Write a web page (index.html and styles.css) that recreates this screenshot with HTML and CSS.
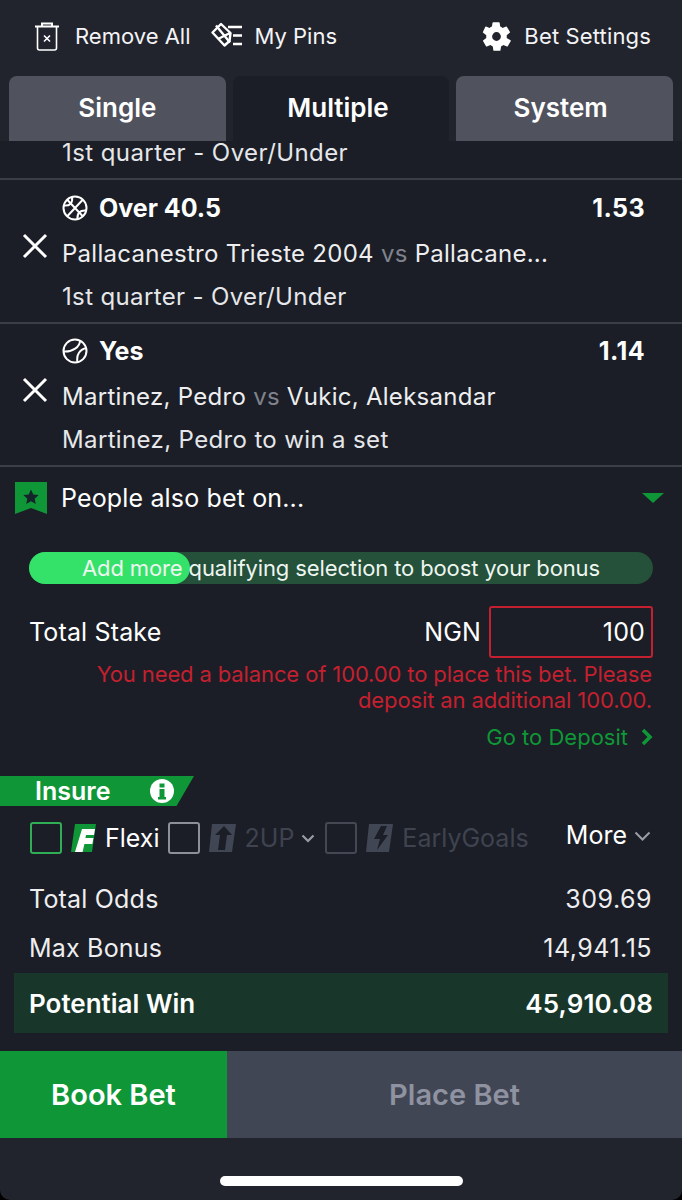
FILE: index.html
```html
<!DOCTYPE html>
<html>
	<head>
		<title>Betslip</title>
		<link rel="stylesheet" href="styles.css">
	</head>
	<body>
	<div class="slip">
		<div class="toolbar">
			<div class="tool tool_remove">
				<svg class="ico_trash" width="26" height="30" viewBox="0 0 26 30" fill="none" stroke="#fff" stroke-width="1.6"><path d="M1 5.500h24M8 5V2.500h10V5" stroke-width="2"/><path d="M3.500 6v21a2 2 0 0 0 2 2h15a2 2 0 0 0 2-2V6"/><path d="M10 14.500l6 6M16 14.500l-6 6"/></svg>
				<span>Remove All</span>
			</div>
			<div class="tool tool_pins">
				<svg width="32" height="28" viewBox="0 0 32 28" fill="none" stroke="#fff" stroke-width="2.400"><path d="M10 2L1.500 10.500l12 13 5-4.500 1-8z" stroke-linejoin="round"/><path d="M5 3.500l14 17M19 11L7 17"/><path d="M17 5h14M22 13.500h9M22 22h9"/></svg>
				<span>My Pins</span>
			</div>
			<div class="tool tool_settings">
				<svg width="33" height="33" viewBox="0 0 24 24" fill="#fff"><path fill-rule="evenodd" d="M19.400 13a7.600 7.600 0 0 0 0-2l2.200-1.700a.5.5 0 0 0 .1-.7l-2.100-3.600a.5.5 0 0 0-.6-.2l-2.600 1a7.500 7.500 0 0 0-1.700-1l-.4-2.800a.5.5 0 0 0-.5-.4h-4.200a.5.5 0 0 0-.5.4l-.4 2.800a7.500 7.500 0 0 0-1.700 1l-2.600-1a.5.5 0 0 0-.6.2L2.200 8.600a.5.5 0 0 0 .1.7L4.600 11a7.600 7.600 0 0 0 0 2l-2.200 1.700a.5.5 0 0 0-.1.7l2.100 3.600c.1.2.4.3.6.2l2.600-1c.5.4 1.100.7 1.700 1l.4 2.800c0 .2.2.4.5.4h4.200c.3 0 .5-.2.5-.4l.4-2.800c.6-.3 1.200-.6 1.700-1l2.600 1c.2.1.5 0 .6-.2l2.100-3.600a.5.5 0 0 0-.1-.7zM12 15.200a3.200 3.200 0 1 1 0-6.400 3.200 3.200 0 0 1 0 6.400z"/></svg>
				<span>Bet Settings</span>
			</div>
		</div>

		<div class="tabs">
			<div class="tab">Single</div>
			<div class="tab tab_active">Multiple</div>
			<div class="tab tab_system">System</div>
		</div>

		<div class="body_panel">
			<!-- first selection is scrolled mostly out of view -->
			<div class="cut_row">1st quarter - Over/Under</div>

			<div class="bet_row">
				<svg class="ico_close" width="28" height="28" viewBox="0 0 28 28" stroke="#fff" stroke-width="3"><path d="M3 3l22 22M25 3L3 25"/></svg>
				<div class="bet_info">
					<div class="bet_head">
						<svg width="26" height="26" viewBox="0 0 26 26" fill="none" stroke="#fff" stroke-width="2"><circle cx="13" cy="13" r="11.500"/><path d="M5 4.500L21 21.500M21 4.500L5 21.500M10 2c1 6-2 9-8 8.500M24 15.500c-6-.5-9 2.500-8.500 8.500"/></svg>
						<span class="pick">Over 40.5</span>
						<span class="odds">1.53</span>
					</div>
					<div class="teams">Pallacanestro Trieste 2004 <i>vs</i> Pallacane...</div>
					<div class="market">1st quarter - Over/Under</div>
				</div>
			</div>

			<div class="bet_row bet_row_last">
				<svg class="ico_close" width="28" height="28" viewBox="0 0 28 28" stroke="#fff" stroke-width="3"><path d="M3 3l22 22M25 3L3 25"/></svg>
				<div class="bet_info">
					<div class="bet_head">
						<svg width="26" height="26" viewBox="0 0 26 26" fill="none" stroke="#fff" stroke-width="2"><circle cx="13" cy="13" r="11.500"/><path d="M18 2.500C18 9 10.500 14 2 13.500M24.500 10C18 11 14 17 15.500 24.500"/></svg>
						<span class="pick">Yes</span>
						<span class="odds">1.14</span>
					</div>
					<div class="teams">Martinez, Pedro <i>vs</i> Vukic, Aleksandar</div>
					<div class="market">Martinez, Pedro to win a set</div>
				</div>
			</div>

			<div class="also_bet">
				<svg width="32" height="32" viewBox="0 0 32 32"><path d="M0 0h32v32l-16-6-16 6z" fill="#0f9737"/><path d="M16 7.500l2.300 5 5.400.6-4 3.600 1.100 5.300-4.800-2.700-4.800 2.700 1.100-5.300-4-3.600 5.400-.6z" fill="#15242a"/></svg>
				<span>People also bet on...</span>
				<div class="caret_down"></div>
			</div>

			<div class="progress">
				<div class="progress_fill"></div>
				<span class="progress_text">Add more qualifying selection to boost your bonus</span>
			</div>

			<div class="stake_row">
				<span>Total Stake</span>
				<span class="currency">NGN</span>
				<div class="stake_input">100</div>
			</div>
			<div class="stake_error">You need a balance of 100.00 to place this bet. Please<br>deposit an additional 100.00.</div>
			<div class="deposit_link">Go to Deposit
				<svg width="12" height="18" viewBox="0 0 12 18" fill="none" stroke="#0f9737" stroke-width="3.600"><path d="M2 2l7 7-7 7"/></svg>
			</div>

			<div class="insure">
				<span>Insure</span>
				<svg width="24" height="24" viewBox="0 0 24 24"><circle cx="12" cy="12" r="12" fill="#fff"/><path d="M9.500 4.500h5v4h-5zM9.500 10h5v8h1.500v2.500H8V18h1.500z" fill="#0f9737"/></svg>
			</div>

			<div class="options">
				<div class="check check_on"></div>
				<svg class="opt_logo" width="25" height="28" viewBox="0 0 25 28"><path d="M4 0h21l-4 28H0z" fill="#0f9737"/><path d="M11 5h13l-1 6h-8l-.6 3h8l-1 6h-8l-1.800 8H4z" fill="#fff"/></svg>
				<span class="opt_name">Flexi</span>
				<div class="check check_mid"></div>
				<svg class="opt_logo" width="27" height="28" viewBox="0 0 27 28"><path d="M3 0h24l-4 28H0z" fill="#414654"/><path d="M15 2l8 9h-5l-2 15H9l2-15H6z" fill="#1b1e26"/></svg>
				<span class="opt_name opt_off">2UP</span>
				<svg class="opt_chev" width="14" height="9" viewBox="0 0 14 9" fill="none" stroke="#9a9ca6" stroke-width="2.200"><path d="M1.500 1.500L7 7l5.500-5.500"/></svg>
				<div class="check check_off"></div>
				<svg class="opt_logo" width="27" height="28" viewBox="0 0 27 28"><path d="M3 0h24l-4 28H0z" fill="#414654"/><path d="M15 2h6l-4 9h5l-11 15 3-11H8z" fill="#1b1e26"/></svg>
				<span class="opt_name opt_off">EarlyGoals</span>
				<span class="more">More</span>
				<svg class="more_chev" width="17" height="10" viewBox="0 0 17 10" fill="none" stroke="#9a9ca6" stroke-width="2"><path d="M1.500 1.500l7 7 7-7"/></svg>
			</div>

			<div class="total_row">
				<span>Total Odds</span>
				<span class="total_value">309.69</span>
			</div>
			<div class="total_row total_row_last">
				<span>Max Bonus</span>
				<span class="total_value">14,941.15</span>
			</div>
			<div class="win_row">
				<span>Potential Win</span>
				<span class="win_value">45,910.08</span>
			</div>
		</div>

		<div class="actions">
			<div class="btn_book">Book Bet</div>
			<div class="btn_place">Place Bet</div>
		</div>
		<div class="home_bar"><div class="home_pill"></div></div>
	</div>
	</body>
</html>
```

FILE: styles.css
```css
html,
body {
  height: 100%;
}
body {
  margin: 0;
  background: #000;
  font-family: "Inter", "Liberation Sans", sans-serif;
  color: #fff;
  overflow: hidden;
}
.slip {
  width: 682px;
  height: 1200px;
  display: flex;
  flex-direction: column;
  background: #22242d;
  border-radius: 0 0 10px 10px;
  overflow: hidden;
}

/* top toolbar */
.toolbar {
  height: 76px;
  flex: none;
  box-sizing: border-box;
  padding-bottom: 4px;
  display: flex;
  align-items: center;
  font-size: 22px;
  color: #f4f4f6;
}
.tool {
  display: flex;
  align-items: center;
}
.tool_remove {
  margin-left: 34px;
  gap: 15px;
}
.tool_pins {
  margin-left: 21px;
  gap: 11px;
}
.tool_settings {
  margin-left: auto;
  margin-right: 31px;
  gap: 11px;
  letter-spacing: .15px;
}

/* tabs */
.tabs {
  height: 65px;
  flex: none;
  display: grid;
  grid-template-columns: repeat(3, 1fr);
  gap: 7px;
  padding: 0 9px;
}
.tab {
  display: flex;
  align-items: center;
  justify-content: center;
  padding-bottom: 2px;
  box-sizing: border-box;
  background: #50535e;
  border-radius: 8px 8px 0 0;
  font-size: 26px;
  font-weight: 600;
}
.tab_active {
  background: #1b1e26;
  padding-right: 6px;
}
.tab_system {
  padding-right: 8px;
}

/* scrolling part */
.body_panel {
  height: 910px;
  flex: none;
  background: #1b1e26;
  font-size: 24px;
}
.cut_row {
  height: 39px;
  box-sizing: border-box;
  padding-left: 62px;
  line-height: 24px;
  letter-spacing: .42px;
  border-bottom: 2px solid #3b3e47;
  color: #e6e7ea;
}
.bet_row {
  height: 144px;
  box-sizing: border-box;
  display: flex;
  align-items: center;
  padding-left: 21px;
  border-bottom: 2px solid #3b3e47;
}
.bet_row_last {
  height: 143px;
}
.ico_close {
  margin-bottom: 10px;
}
.bet_info {
  flex: 1;
  margin-left: 13px;
  padding: 2px 37px 0 0;
}
.bet_head {
  display: flex;
  align-items: center;
  gap: 11px;
  height: 30px;
  margin-bottom: 16px;
}
.pick {
  font-weight: 700;
  font-size: 25px;
}
.odds {
  margin-left: auto;
  font-weight: 700;
  font-size: 25px;
  letter-spacing: .4px;
}
.teams {
  height: 30px;
  line-height: 30px;
  margin-bottom: 13px;
  letter-spacing: .28px;
  color: #eeeef0;
}
.teams i {
  font-style: normal;
  color: #80838d;
}
.market {
  height: 30px;
  line-height: 30px;
  letter-spacing: .36px;
  color: #e6e7ea;
}

.also_bet {
  height: 65px;
  box-sizing: border-box;
  display: flex;
  align-items: center;
  padding: 0 18px 4px 15px;
  gap: 14px;
  font-size: 25px;
  letter-spacing: .15px;
}
.caret_down {
  margin-left: auto;
  width: 0;
  height: 0;
  border-left: 11px solid transparent;
  border-right: 11px solid transparent;
  border-top: 10px solid #0f9737;
}

/* bonus progress */
.progress {
  position: relative;
  height: 32px;
  margin: 20px 29px 0;
  background: #25503a;
  border-radius: 16px;
  font-size: 22px;
  letter-spacing: -.12px;
  display: flex;
  align-items: center;
  justify-content: center;
}
.progress_fill {
  position: absolute;
  left: 0;
  top: 0;
  bottom: 0;
  width: 161px;
  background: #35e269;
  border-radius: 16px;
}
.progress_text {
  position: relative;
  color: #eef6f0;
}

/* stake */
.stake_row {
  display: flex;
  align-items: center;
  margin: 22px 29px 0;
  font-size: 25px;
  letter-spacing: .15px;
}
.currency {
  margin-left: auto;
  margin-right: 8px;
}
.stake_input {
  width: 164px;
  height: 52px;
  box-sizing: border-box;
  border: 2px solid #c4202f;
  border-radius: 3px;
  text-align: right;
  line-height: 48px;
  padding-right: 6px;
}
.stake_error {
  margin: 3px 30px 0 0;
  text-align: right;
  font-size: 22px;
  letter-spacing: -.12px;
  line-height: 26px;
  color: #c4202f;
}
.deposit_link {
  margin: 10px 29px 0 0;
  display: flex;
  justify-content: flex-end;
  align-items: center;
  gap: 13px;
  font-size: 22px;
  color: #0f9737;
  height: 28px;
}

/* insure ribbon */
.insure {
  width: 194px;
  height: 30px;
  margin-top: 25px;
  box-sizing: border-box;
  display: flex;
  align-items: center;
  padding-left: 35px;
  gap: 40px;
  background: #0f9737;
  clip-path: polygon(0 0, 100% 0, 91% 100%, 0 100%);
  font-size: 25px;
  font-weight: 600;
}

/* option checkboxes */
.options {
  height: 32px;
  margin-top: 16px;
  padding-left: 30px;
  display: flex;
  align-items: center;
  font-size: 25px;
}
.check {
  width: 32px;
  height: 32px;
  flex: none;
  box-sizing: border-box;
  border-radius: 3px;
  border: 2px solid #8d8f99;
}
.check_on {
  border-color: #2fae55;
}
.check_mid {
  margin-left: 8px;
}
.check_off {
  border-color: #454853;
  margin-left: 10px;
}
.opt_logo {
  margin-left: 9px;
  flex: none;
}
.opt_name {
  margin-left: 9px;
}
.opt_off {
  color: #3f4350;
}
.opt_chev {
  margin-left: 7px;
}
.more {
  margin: 0 7px 6px auto;
}
.more_chev {
  margin: 0 31px 4px 0;
}

/* totals */
.total_row {
  display: flex;
  justify-content: space-between;
  height: 30px;
  line-height: 30px;
  margin: 0 30px 19px 29px;
  font-size: 25px;
  letter-spacing: .2px;
  color: #eeeef0;
}
.options + .total_row {
  margin-top: 30px;
}
.total_row_last {
  margin-bottom: 10px;
}
.total_value {
  letter-spacing: .5px;
}
.win_row {
  height: 60px;
  margin: 0 14px;
  padding: 0 15px;
  display: flex;
  align-items: center;
  justify-content: space-between;
  background: #18372a;
  font-size: 26px;
  font-weight: 600;
}
.win_value {
  letter-spacing: .15px;
}

/* bottom buttons */
.actions {
  height: 87px;
  flex: none;
  display: flex;
  font-size: 29px;
  font-weight: 600;
}
.btn_book {
  width: 227px;
  display: flex;
  align-items: center;
  justify-content: center;
  background: #0f9737;
}
.btn_place {
  flex: 1;
  display: flex;
  align-items: center;
  justify-content: center;
  background: #414654;
  color: #8f92a0;
}
.home_bar {
  flex: 1;
  display: flex;
  justify-content: center;
}
.home_pill {
  width: 243px;
  height: 10px;
  margin-top: 38px;
  background: #fff;
  border-radius: 5px;
}
```
